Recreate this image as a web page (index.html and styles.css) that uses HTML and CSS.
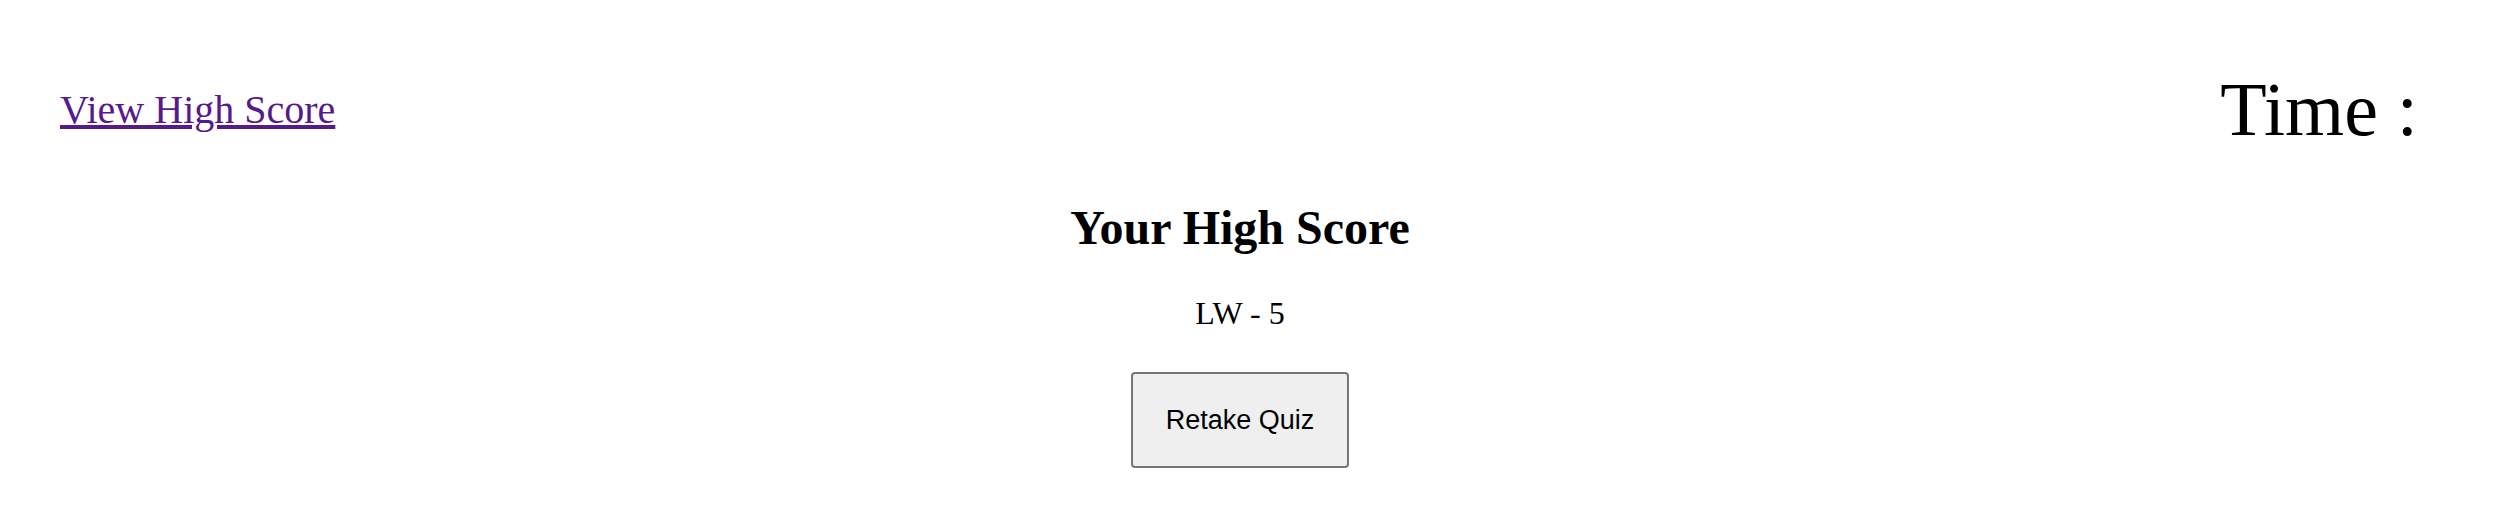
FILE: index.html
```html
<!DOCTYPE html>
<html>
<head>
<meta charset="utf-8">
<link rel="stylesheet" href="styles.css">
</head>
<body>
<header class="top">
  <a class="hs-link" href="#">View High Score</a>
  <div class="timer">Time :</div>
</header>
<main class="result">
  <h1 class="title">Your High Score</h1>
  <p class="score">LW - 5</p>
  <button class="retake">Retake Quiz</button>
</main>
</body>
</html>
```
FILE: styles.css
```css
html, body {
  margin: 0;
  padding: 0;
  background: #fff;
  font-family: "Liberation Serif", "Times New Roman", serif;
  color: #000;
}
body {
  width: 2480px;
}
.top {
  display: flex;
  justify-content: space-between;
  align-items: center;
  padding: 89px 62px 0 60px;
  height: 129px;
  box-sizing: border-box;
}
.hs-link {
  font-size: 40px;
  color: #551a8b;
  text-decoration: underline;
}
.timer {
  font-size: 76px;
}
.result {
  display: flex;
  flex-direction: column;
  align-items: center;
}
.title {
  font-size: 48px;
  font-weight: bold;
  margin: 71px 0 0 0;
}
.score {
  font-size: 32px;
  margin: 40px 0 0 0;
}
.retake {
  font-family: "Liberation Sans", Arial, sans-serif;
  font-size: 27px;
  margin-top: 40px;
  padding: 0 33px;
  height: 96px;
  background: #efefef;
  border: 2px solid #767676;
  border-radius: 4px;
  color: #000;
}
```
